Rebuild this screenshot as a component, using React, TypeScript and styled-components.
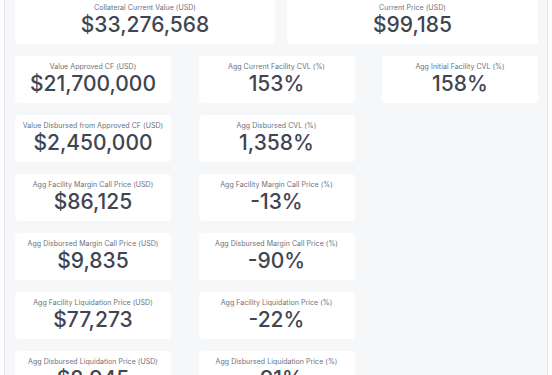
import React from "react"
import styled, { createGlobalStyle } from "styled-components"

const Global = createGlobalStyle`
  html, body {
    margin: 0;
    padding: 0;
    background: #fdfdfe;
    overflow: hidden;
  }
`

const Page = styled.div`
  margin: 0 4px;
  border-left: 1px solid #e6e8ec;
  border-right: 1px solid #e6e8ec;
  background: #f6f7f9;
  padding: 0 9px 20px 10px;
  height: 400px;
  box-sizing: border-box;
  font-family: Inter, "Noto Sans", sans-serif;
`

const Grid = styled.div`
  display: flex;
  flex-direction: column;
  gap: 12px;
  margin-top: -3px;
`

const Row = styled.div`
  display: flex;
  justify-content: space-between;
`

const Card = styled.div<{ $w: number }>`
  width: ${(p) => p.$w}px;
  height: 47px;
  box-sizing: border-box;
  background: #ffffff;
  border-radius: 4px;
  display: flex;
  flex-direction: column;
  align-items: center;
  padding-top: 6px;
`

const Label = styled.div`
  font-size: 7px;
  line-height: 9px;
  letter-spacing: 0.05px;
  color: #6b717c;
  white-space: nowrap;
`

const Value = styled.div`
  font-size: 21px;
  line-height: 26px;
  font-weight: 500;
  color: #3f4551;
  white-space: nowrap;
`

type Stat = { label: string; value: string }

const StatCard = ({ label, value, w }: Stat & { w: number }) => (
  <Card $w={w}>
    <Label>{label}</Label>
    <Value>{value}</Value>
  </Card>
)

const rows: Stat[][] = [
  [
    { label: "Value Approved CF (USD)", value: "$21,700,000" },
    { label: "Agg Current Facility CVL (%)", value: "153%" },
    { label: "Agg Initial Facility CVL (%)", value: "158%" },
  ],
  [
    { label: "Value Disbursed from Approved CF (USD)", value: "$2,450,000" },
    { label: "Agg Disbursed CVL (%)", value: "1,358%" },
  ],
  [
    { label: "Agg Facility Margin Call Price (USD)", value: "$86,125" },
    { label: "Agg Facility Margin Call Price (%)", value: "-13%" },
  ],
  [
    { label: "Agg Disbursed Margin Call Price (USD)", value: "$9,835" },
    { label: "Agg Disbursed Margin Call Price (%)", value: "-90%" },
  ],
  [
    { label: "Agg Facility Liquidation Price (USD)", value: "$77,273" },
    { label: "Agg Facility Liquidation Price (%)", value: "-22%" },
  ],
  [
    { label: "Agg Disbursed Liquidation Price (USD)", value: "$8,945" },
    { label: "Agg Disbursed Liquidation Price (%)", value: "-91%" },
  ],
]

const Spacer = styled.div`
  width: 156px;
`

export default function App() {
  return (
    <>
      <Global />
      <Page>
        <Grid>
          <Row>
            <StatCard w={260} label="Collateral Current Value (USD)" value="$33,276,568" />
            <StatCard w={251} label="Current Price (USD)" value="$99,185" />
          </Row>
          {rows.map((r, i) => (
            <Row key={i}>
              {r.map((s) => (
                <StatCard key={s.label} w={156} {...s} />
              ))}
              {r.length < 3 && <Spacer />}
            </Row>
          ))}
        </Grid>
      </Page>
    </>
  )
}
